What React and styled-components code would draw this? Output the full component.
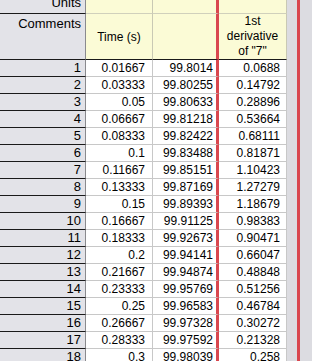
import React from 'react';
import styled, { createGlobalStyle } from 'styled-components';

const GlobalStyle = createGlobalStyle`
  html, body {
    margin: 0;
    padding: 0;
    width: 312px;
    height: 361px;
    overflow: hidden;
    background: #dcdce1;
    font-family: "Liberation Sans", Arial, sans-serif;
    font-size: 12px;
    color: #000;
  }
`;

const Sheet = styled.div`
  display: flex;
  height: 361px;
  overflow: hidden;
`;

const Table = styled.div`
  display: flex;
  flex-direction: column;
  margin-top: -4px;
`;

const Gutter = styled.div`
  width: 10px;
  flex: none;
  border-right: 3px solid #d9474f;
`;

const Row = styled.div`
  display: grid;
  grid-template-columns: 86px 67px 66px 68px;
  height: ${(p) => p.$h}px;
  flex: none;
`;

const Head = styled.div`
  box-sizing: border-box;
  background: #e3e3e8;
  border-right: 1px solid #8a8a8e;
  border-bottom: 1px solid ${(p) => p.$line || '#1a1a1a'};
  text-align: right;
  font-size: 13px;
  padding: ${(p) => p.$pad || '0 4px 0 0'};
  line-height: ${(p) => p.$lh || '16px'};
  overflow: hidden;
`;

const Label = styled.div`
  box-sizing: border-box;
  background: #fbfbd6;
  border-right: ${(p) => (p.$red ? '3px solid #d9474f' : '1px solid #c9c9b4')};
  border-bottom: 1px solid ${(p) => p.$line || '#d0d0bc'};
  display: flex;
  align-items: ${(p) => p.$align || 'center'};
  justify-content: center;
  text-align: center;
  line-height: 15px;
  padding-top: ${(p) => p.$top || 0}px;
`;

const Cell = styled.div`
  box-sizing: border-box;
  background: #fff;
  border-right: ${(p) => (p.$red ? '3px solid #d9474f' : '1px solid #c8c8c8')};
  border-bottom: 1px solid #c8c8c8;
  text-align: right;
  padding-right: ${(p) => p.$pr}px;
  line-height: 16px;
  white-space: nowrap;
`;

const data = [
  ['0.01667', '99.8014', '0.0688'],
  ['0.03333', '99.80255', '0.14792'],
  ['0.05', '99.80633', '0.28896'],
  ['0.06667', '99.81218', '0.53664'],
  ['0.08333', '99.82422', '0.68111'],
  ['0.1', '99.83488', '0.81871'],
  ['0.11667', '99.85151', '1.10423'],
  ['0.13333', '99.87169', '1.27279'],
  ['0.15', '99.89393', '1.18679'],
  ['0.16667', '99.91125', '0.98383'],
  ['0.18333', '99.92673', '0.90471'],
  ['0.2', '99.94141', '0.66047'],
  ['0.21667', '99.94874', '0.48848'],
  ['0.23333', '99.95769', '0.51256'],
  ['0.25', '99.96583', '0.46784'],
  ['0.26667', '99.97328', '0.30272'],
  ['0.28333', '99.97592', '0.21328'],
  ['0.3', '99.98039', '0.258'],
];

export default function App() {
  return (
    <>
      <GlobalStyle />
      <Sheet>
        <Table>
          <Row $h={18}>
            <Head $lh="13px">Units</Head>
            <Label />
            <Label $red />
            <Label />
          </Row>
          <Row $h={46}>
            <Head $pad="2px 4px 0 0" $lh="15px">Comments</Head>
            <Label $line="#1a1a1a" $top={1}>Time (s)</Label>
            <Label $red $line="#1a1a1a" />
            <Label $line="#1a1a1a" $align="flex-start">
              1st<br />derivative<br />of "7"
            </Label>
          </Row>
          {data.map((r, i) => (
            <Row key={i} $h={17}>
              <Head>{i + 1}</Head>
              <Cell $pr={7}>{r[0]}</Cell>
              <Cell $pr={3} $red>{r[1]}</Cell>
              <Cell $pr={6}>{r[2]}</Cell>
            </Row>
          ))}
        </Table>
        <Gutter />
      </Sheet>
    </>
  );
}
